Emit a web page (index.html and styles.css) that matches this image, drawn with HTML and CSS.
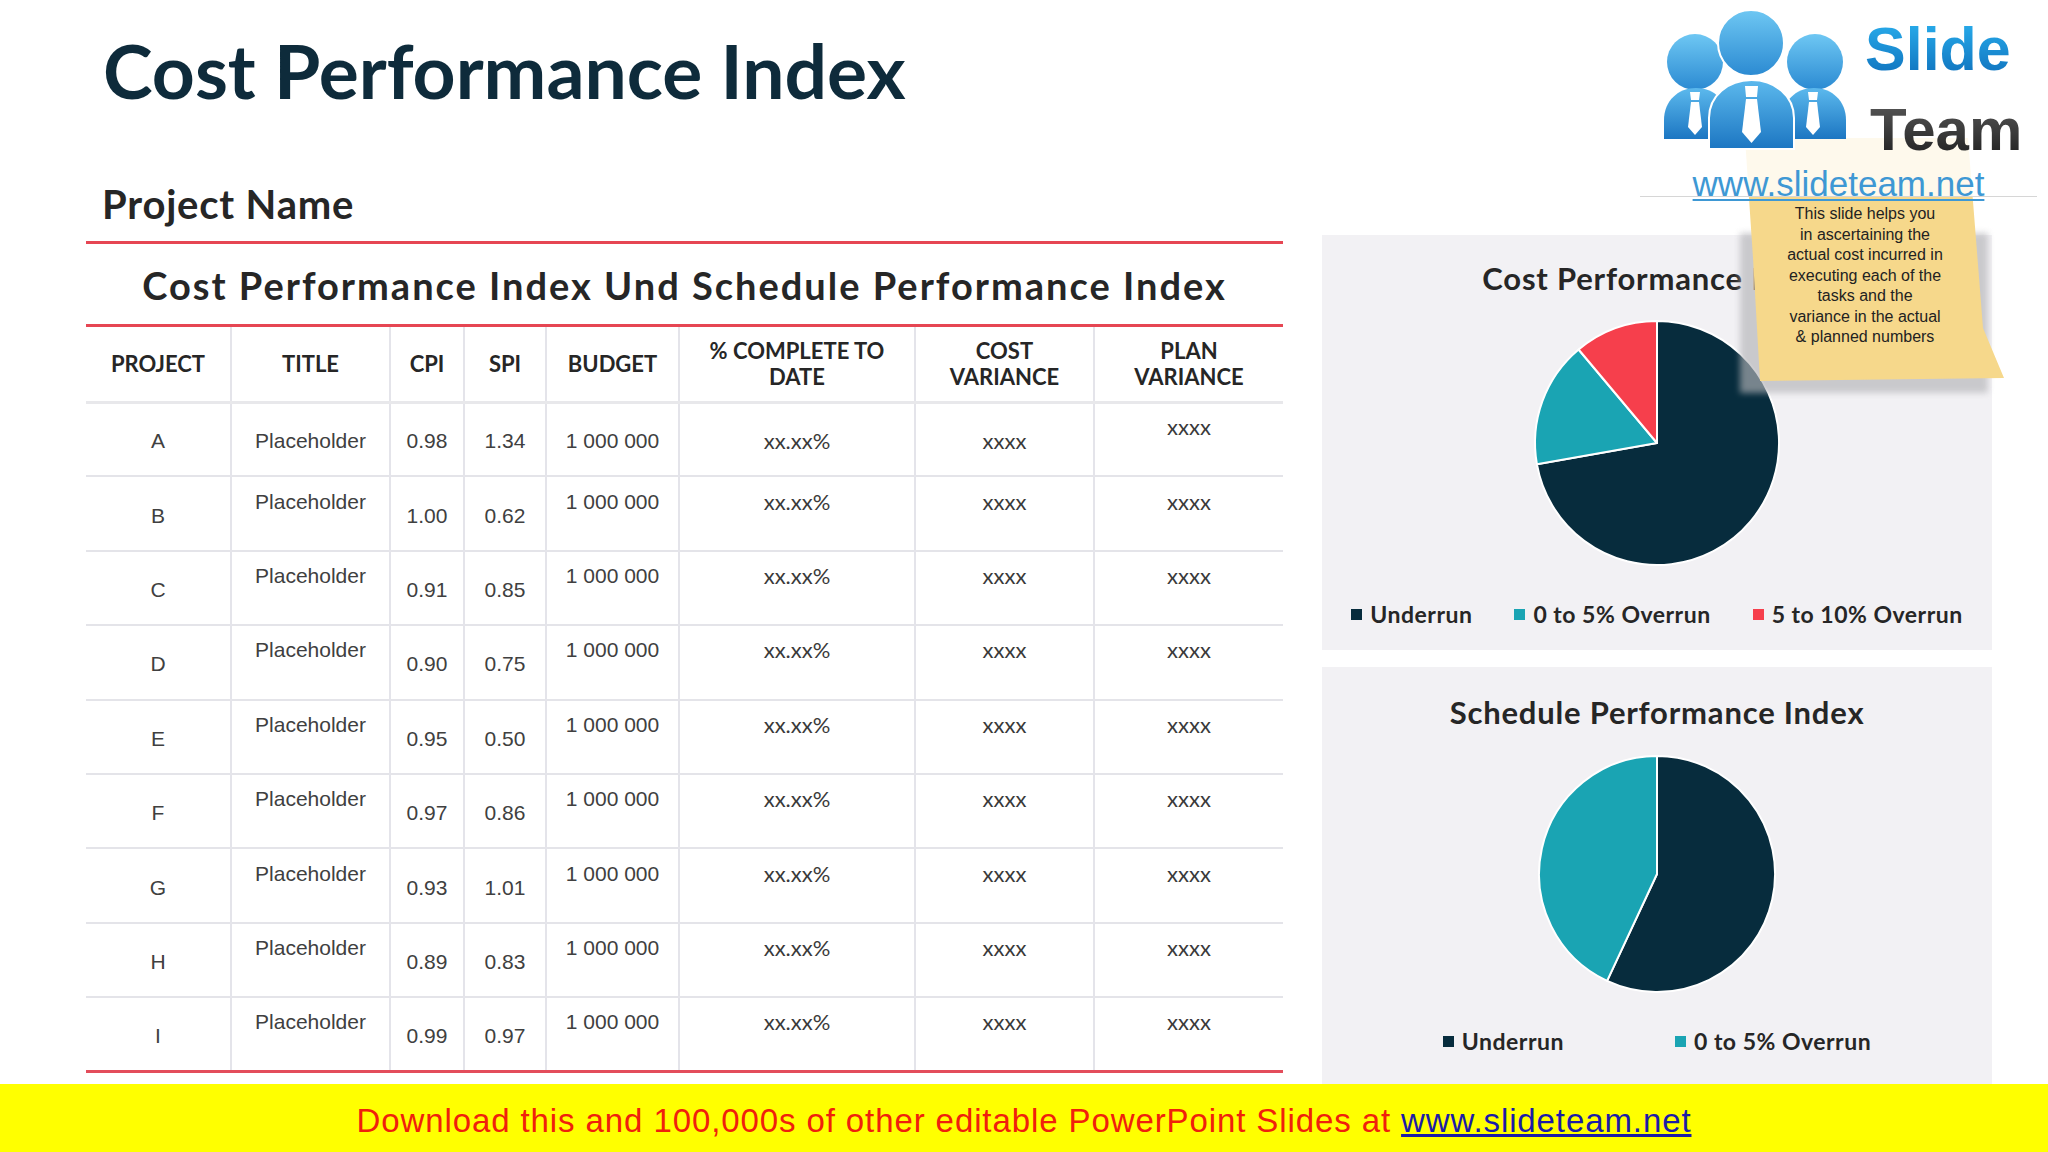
FILE: index.html
```html
<!DOCTYPE html>
<html lang="en">
<head>
<meta charset="utf-8">
<title>Cost Performance Index</title>
<link rel="stylesheet" href="styles.css">
</head>
<body>
<div class="slide">
  <div class="main">
    <section class="left">
      <h1 class="title">Cost Performance Index</h1>
      <h2 class="project">Project Name</h2>
      <h3 class="table-title">Cost Performance Index Und Schedule Performance Index</h3>
      <table class="grid">
        <colgroup>
          <col class="c1"><col class="c2"><col class="c3"><col class="c4"><col class="c5"><col class="c6"><col class="c7"><col class="c8">
        </colgroup>
        <thead>
          <tr><th>PROJECT</th><th>TITLE</th><th>CPI</th><th>SPI</th><th>BUDGET</th><th>% COMPLETE TO<br>DATE</th><th>COST<br>VARIANCE</th><th>PLAN<br>VARIANCE</th></tr>
        </thead>
        <tbody>
          <tr><td class="mid">A</td><td class="mid">Placeholder</td><td class="mid">0.98</td><td class="mid">1.34</td><td class="mid">1 000 000</td><td class="mid g">xx.xx%</td><td class="mid g">xxxx</td><td class="up g">xxxx</td></tr>
          <tr><td class="mid">B</td><td class="up">Placeholder</td><td class="mid">1.00</td><td class="mid">0.62</td><td class="up">1 000 000</td><td class="up g">xx.xx%</td><td class="up g">xxxx</td><td class="up g">xxxx</td></tr>
          <tr><td class="mid">C</td><td class="up">Placeholder</td><td class="mid">0.91</td><td class="mid">0.85</td><td class="up">1 000 000</td><td class="up g">xx.xx%</td><td class="up g">xxxx</td><td class="up g">xxxx</td></tr>
          <tr><td class="mid">D</td><td class="up">Placeholder</td><td class="mid">0.90</td><td class="mid">0.75</td><td class="up">1 000 000</td><td class="up g">xx.xx%</td><td class="up g">xxxx</td><td class="up g">xxxx</td></tr>
          <tr><td class="mid">E</td><td class="up">Placeholder</td><td class="mid">0.95</td><td class="mid">0.50</td><td class="up">1 000 000</td><td class="up g">xx.xx%</td><td class="up g">xxxx</td><td class="up g">xxxx</td></tr>
          <tr><td class="mid">F</td><td class="up">Placeholder</td><td class="mid">0.97</td><td class="mid">0.86</td><td class="up">1 000 000</td><td class="up g">xx.xx%</td><td class="up g">xxxx</td><td class="up g">xxxx</td></tr>
          <tr><td class="mid">G</td><td class="up">Placeholder</td><td class="mid">0.93</td><td class="mid">1.01</td><td class="up">1 000 000</td><td class="up g">xx.xx%</td><td class="up g">xxxx</td><td class="up g">xxxx</td></tr>
          <tr><td class="mid">H</td><td class="up">Placeholder</td><td class="mid">0.89</td><td class="mid">0.83</td><td class="up">1 000 000</td><td class="up g">xx.xx%</td><td class="up g">xxxx</td><td class="up g">xxxx</td></tr>
          <tr><td class="mid">I</td><td class="up">Placeholder</td><td class="mid">0.99</td><td class="mid">0.97</td><td class="up">1 000 000</td><td class="up g">xx.xx%</td><td class="up g">xxxx</td><td class="up g">xxxx</td></tr>
        </tbody>
      </table>
    </section>

    <aside class="right">
      <div class="panel panel-cpi">
        <h4 class="panel-title">Cost Performance Index</h4>
        <svg class="pie" width="260" height="260" viewBox="-130 -130 260 260">
          <path d="M0 0L0 -122A122 122 0 1 1 -120.1 21.2Z" fill="#072c3d" stroke="#fff" stroke-width="2" stroke-linejoin="round"/>
          <path d="M0 0L-120.1 21.2A122 122 0 0 1 -78.4 -93.5Z" fill="#1aa4b3" stroke="#fff" stroke-width="2" stroke-linejoin="round"/>
          <path d="M0 0L-78.4 -93.5A122 122 0 0 1 0 -122Z" fill="#f63f4c" stroke="#fff" stroke-width="2" stroke-linejoin="round"/>
        </svg>
        <ul class="legend">
          <li><span class="sw dark"></span>Underrun</li>
          <li><span class="sw teal"></span>0 to 5% Overrun</li>
          <li><span class="sw red"></span>5 to 10% Overrun</li>
        </ul>
      </div>
      <div class="panel panel-spi">
        <h4 class="panel-title">Schedule Performance Index</h4>
        <svg class="pie" width="260" height="260" viewBox="-130 -130 260 260">
          <path d="M0 0L0 -118A118 118 0 1 1 -49.9 106.9Z" fill="#072c3d" stroke="#fff" stroke-width="2" stroke-linejoin="round"/>
          <path d="M0 0L-49.9 106.9A118 118 0 0 1 0 -118Z" fill="#1aa4b3" stroke="#fff" stroke-width="2" stroke-linejoin="round"/>
        </svg>
        <ul class="legend wide">
          <li><span class="sw dark"></span>Underrun</li>
          <li><span class="sw teal"></span>0 to 5% Overrun</li>
        </ul>
      </div>
    </aside>
  </div>

  <div class="note-shadow"></div>
  <div class="note">
    <p>This slide helps you<br>in ascertaining the<br>actual cost incurred in<br>executing each of the<br>tasks and the<br>variance in the actual<br>&amp; planned numbers</p>
  </div>

  <div class="logo">
    <svg class="people" width="222" height="160" viewBox="0 0 222 160">
      <defs>
        <linearGradient id="gb" x1="0" y1="0" x2="0" y2="1">
          <stop offset="0" stop-color="#5cb9ed"/>
          <stop offset="1" stop-color="#1c76c2"/>
        </linearGradient>
        <linearGradient id="gh" x1="0" y1="0" x2="0" y2="1">
          <stop offset="0" stop-color="#6ec7f3"/>
          <stop offset="1" stop-color="#2b8ad2"/>
        </linearGradient>
      </defs>
      <circle cx="55" cy="62" r="28" fill="url(#gh)"/>
      <circle cx="175" cy="62" r="28" fill="url(#gh)"/>
      <path d="M24 139V120C24 101 38 88 56 88C74 88 88 101 88 120V139Z" fill="url(#gb)"/>
      <path d="M142 139V120C142 101 156 88 174 88C192 88 206 101 206 120V139Z" fill="url(#gb)"/>
      <path d="M50 92H60L59 100H51Z" fill="#fff"/>
      <path d="M51 102H59L62 127L55 135L48 127Z" fill="#fff"/>
      <path d="M168 92H178L177 100H169Z" fill="#fff"/>
      <path d="M169 102H177L180 127L173 135L166 127Z" fill="#fff"/>
      <circle cx="111" cy="43" r="33" fill="url(#gh)" stroke="#fff" stroke-width="2"/>
      <path d="M69 149V118C69 96 88 80 111.5 80C135 80 154 96 154 118V149Z" fill="url(#gb)" stroke="#fff" stroke-width="2"/>
      <path d="M105 86H118L117 97H106Z" fill="#fff"/>
      <path d="M106 99H117L121 132L111.5 143L102 132Z" fill="#fff"/>
    </svg>
    <div class="words">
      <span class="w-slide">Slide</span>
      <span class="w-team">Team</span>
    </div>
    <a class="url">www.slideteam.net</a>
  </div>

  <footer class="banner">Download this and 100,000s of other editable PowerPoint Slides at <a>www.slideteam.net</a></footer>
</div>
</body>
</html>
```

FILE: styles.css
```css
* { box-sizing: border-box; margin: 0; padding: 0; }
html, body { width: 2048px; height: 1152px; overflow: hidden; background: #fff; }
body { font-family: "Liberation Sans", Arial, sans-serif; color: #333; }

.slide { position: relative; width: 2048px; height: 1152px; }
.main { display: flex; height: 1084px; }

/* left column */
.left { margin-left: 86px; width: 1197px; display: flex; flex-direction: column; }
.title {
  font-family: Lato, "DejaVu Sans", sans-serif; font-weight: 700;
  font-size: 75px; line-height: 90px; color: #0e2b3b;
  margin-top: 25px; padding-left: 17px;
}
.project {
  font-family: Lato, sans-serif; font-weight: 700; font-size: 40px; line-height: 48px;
  letter-spacing: 0.8px; color: #262626; padding: 65px 0 13px 16px;
  border-bottom: 3px solid #e64653;
}
.table-title {
  font-family: Lato, sans-serif; font-weight: 700; font-size: 38px; line-height: 46px;
  letter-spacing: 2px; color: #262626; text-align: center;
  padding: 18px 0 16px; border-bottom: 3px solid #e64653;
}

.grid { width: 1197px; border-collapse: collapse; table-layout: fixed; border-bottom: 3px solid #e34d5b; }
.c1 { width: 145px; } .c2 { width: 159px; } .c3 { width: 74px; } .c4 { width: 82px; }
.c5 { width: 133px; } .c6 { width: 236px; } .c7 { width: 179px; } .c8 { width: 189px; }
.grid th {
  height: 75px; font-family: Lato, sans-serif; font-weight: 700; font-size: 22px; line-height: 26px;
  color: #262626; text-align: center; vertical-align: middle;
  border-bottom: 3px solid #e8e8eb; border-right: 2px solid #e4e4ea;
}
.grid td {
  height: 74.4px; font-size: 21px; line-height: 24px; color: #404040; text-align: center;
  vertical-align: middle; border-top: 2px solid #e4e4e9; border-right: 2px solid #e4e4ea;
}
.grid tbody tr:first-child td { border-top: none; }
.grid th:last-child, .grid td:last-child { border-right: none; }
.grid td.mid { padding-top: 4px; }
.grid td.up { padding-bottom: 24px; }
.grid td.g { font-family: Lato, sans-serif; font-size: 22px; color: #3a3a3a; }

/* right column */
.right { margin-left: 39px; width: 670px; padding-top: 235px; display: flex; flex-direction: column; gap: 17px; }
.panel { background: #f2f1f4; display: flex; flex-direction: column; align-items: center; }
.panel-cpi { height: 415px; }
.panel-spi { flex: 1; }
.panel-title {
  font-family: Lato, sans-serif; font-weight: 700; font-size: 31px; line-height: 40px;
  letter-spacing: 0.8px; color: #262626; padding-top: 23px;
}
.panel-spi .panel-title { padding-top: 25px; }
.pie { display: block; margin-top: 15px; }
.panel-spi .pie { margin-top: 12px; }
.legend {
  display: flex; list-style: none; gap: 42px; margin-top: 26px;
  font-family: Lato, sans-serif; font-weight: 700; font-size: 23px; line-height: 30px;
  letter-spacing: 0.5px; color: #262626;
}
.legend.wide { gap: 111px; margin-top: 22px; }
.legend li { display: flex; align-items: center; gap: 8px; }
.sw { width: 11px; height: 11px; display: inline-block; }
.sw.dark { background: #072c3d; }
.sw.teal { background: #1aa4b3; }
.sw.red { background: #f63f4c; }

/* sticky note */
.note-shadow {
  position: absolute; left: 1740px; top: 233px; width: 248px; height: 160px;
  background: #b4b4b8; filter: blur(3px); opacity: 0.65;
}
.note {
  position: absolute; left: 1745px; top: 138px; width: 260px; height: 243px;
  background: #f6d88b;
  clip-path: polygon(0 0, 223px 0, 238px 190px, 259px 240px, 15px 243px, 8px 120px);
}
.note p {
  width: 240px; padding-top: 66px; text-align: center;
  font-size: 16px; line-height: 20.5px; color: #222;
}

/* logo */
.logo {
  position: absolute; left: 1640px; top: 0; width: 397px; height: 197px;
  background: rgba(255, 255, 255, 0.84); border-bottom: 1px solid #d6d6d6;
  display: grid; grid-template-columns: 222px 1fr; grid-template-rows: 160px 37px;
}
.people { display: block; }
.words { display: flex; flex-direction: column; align-items: flex-start; padding: 18px 0 0 3px; }
.w-slide, .w-team {
  font-family: "Liberation Sans", Arial, sans-serif; font-weight: 700; line-height: 62px;
  -webkit-background-clip: text; background-clip: text; color: transparent;
}
.w-slide { font-size: 61px; background-image: linear-gradient(#2ab0ee, #0e6fbb); }
.w-team { font-size: 60px; margin: 19px 0 0 5px; background-image: linear-gradient(#5a5a5a, #1e1e1e); }
.url {
  grid-column: 1 / 3; text-align: center; font-size: 35px; line-height: 36px;
  color: #3e98d4; text-decoration: underline; text-decoration-thickness: 2px;
  text-underline-offset: 3px; margin-top: 6px;
}

/* banner */
.banner {
  height: 68px; background: #ffff00; text-align: center; padding-top: 6px;
  font-size: 33px; line-height: 62px; letter-spacing: 0.9px; color: #f0200c;
  white-space: nowrap;
}
.banner a { color: #1c1ca6; text-decoration: underline; }
```
